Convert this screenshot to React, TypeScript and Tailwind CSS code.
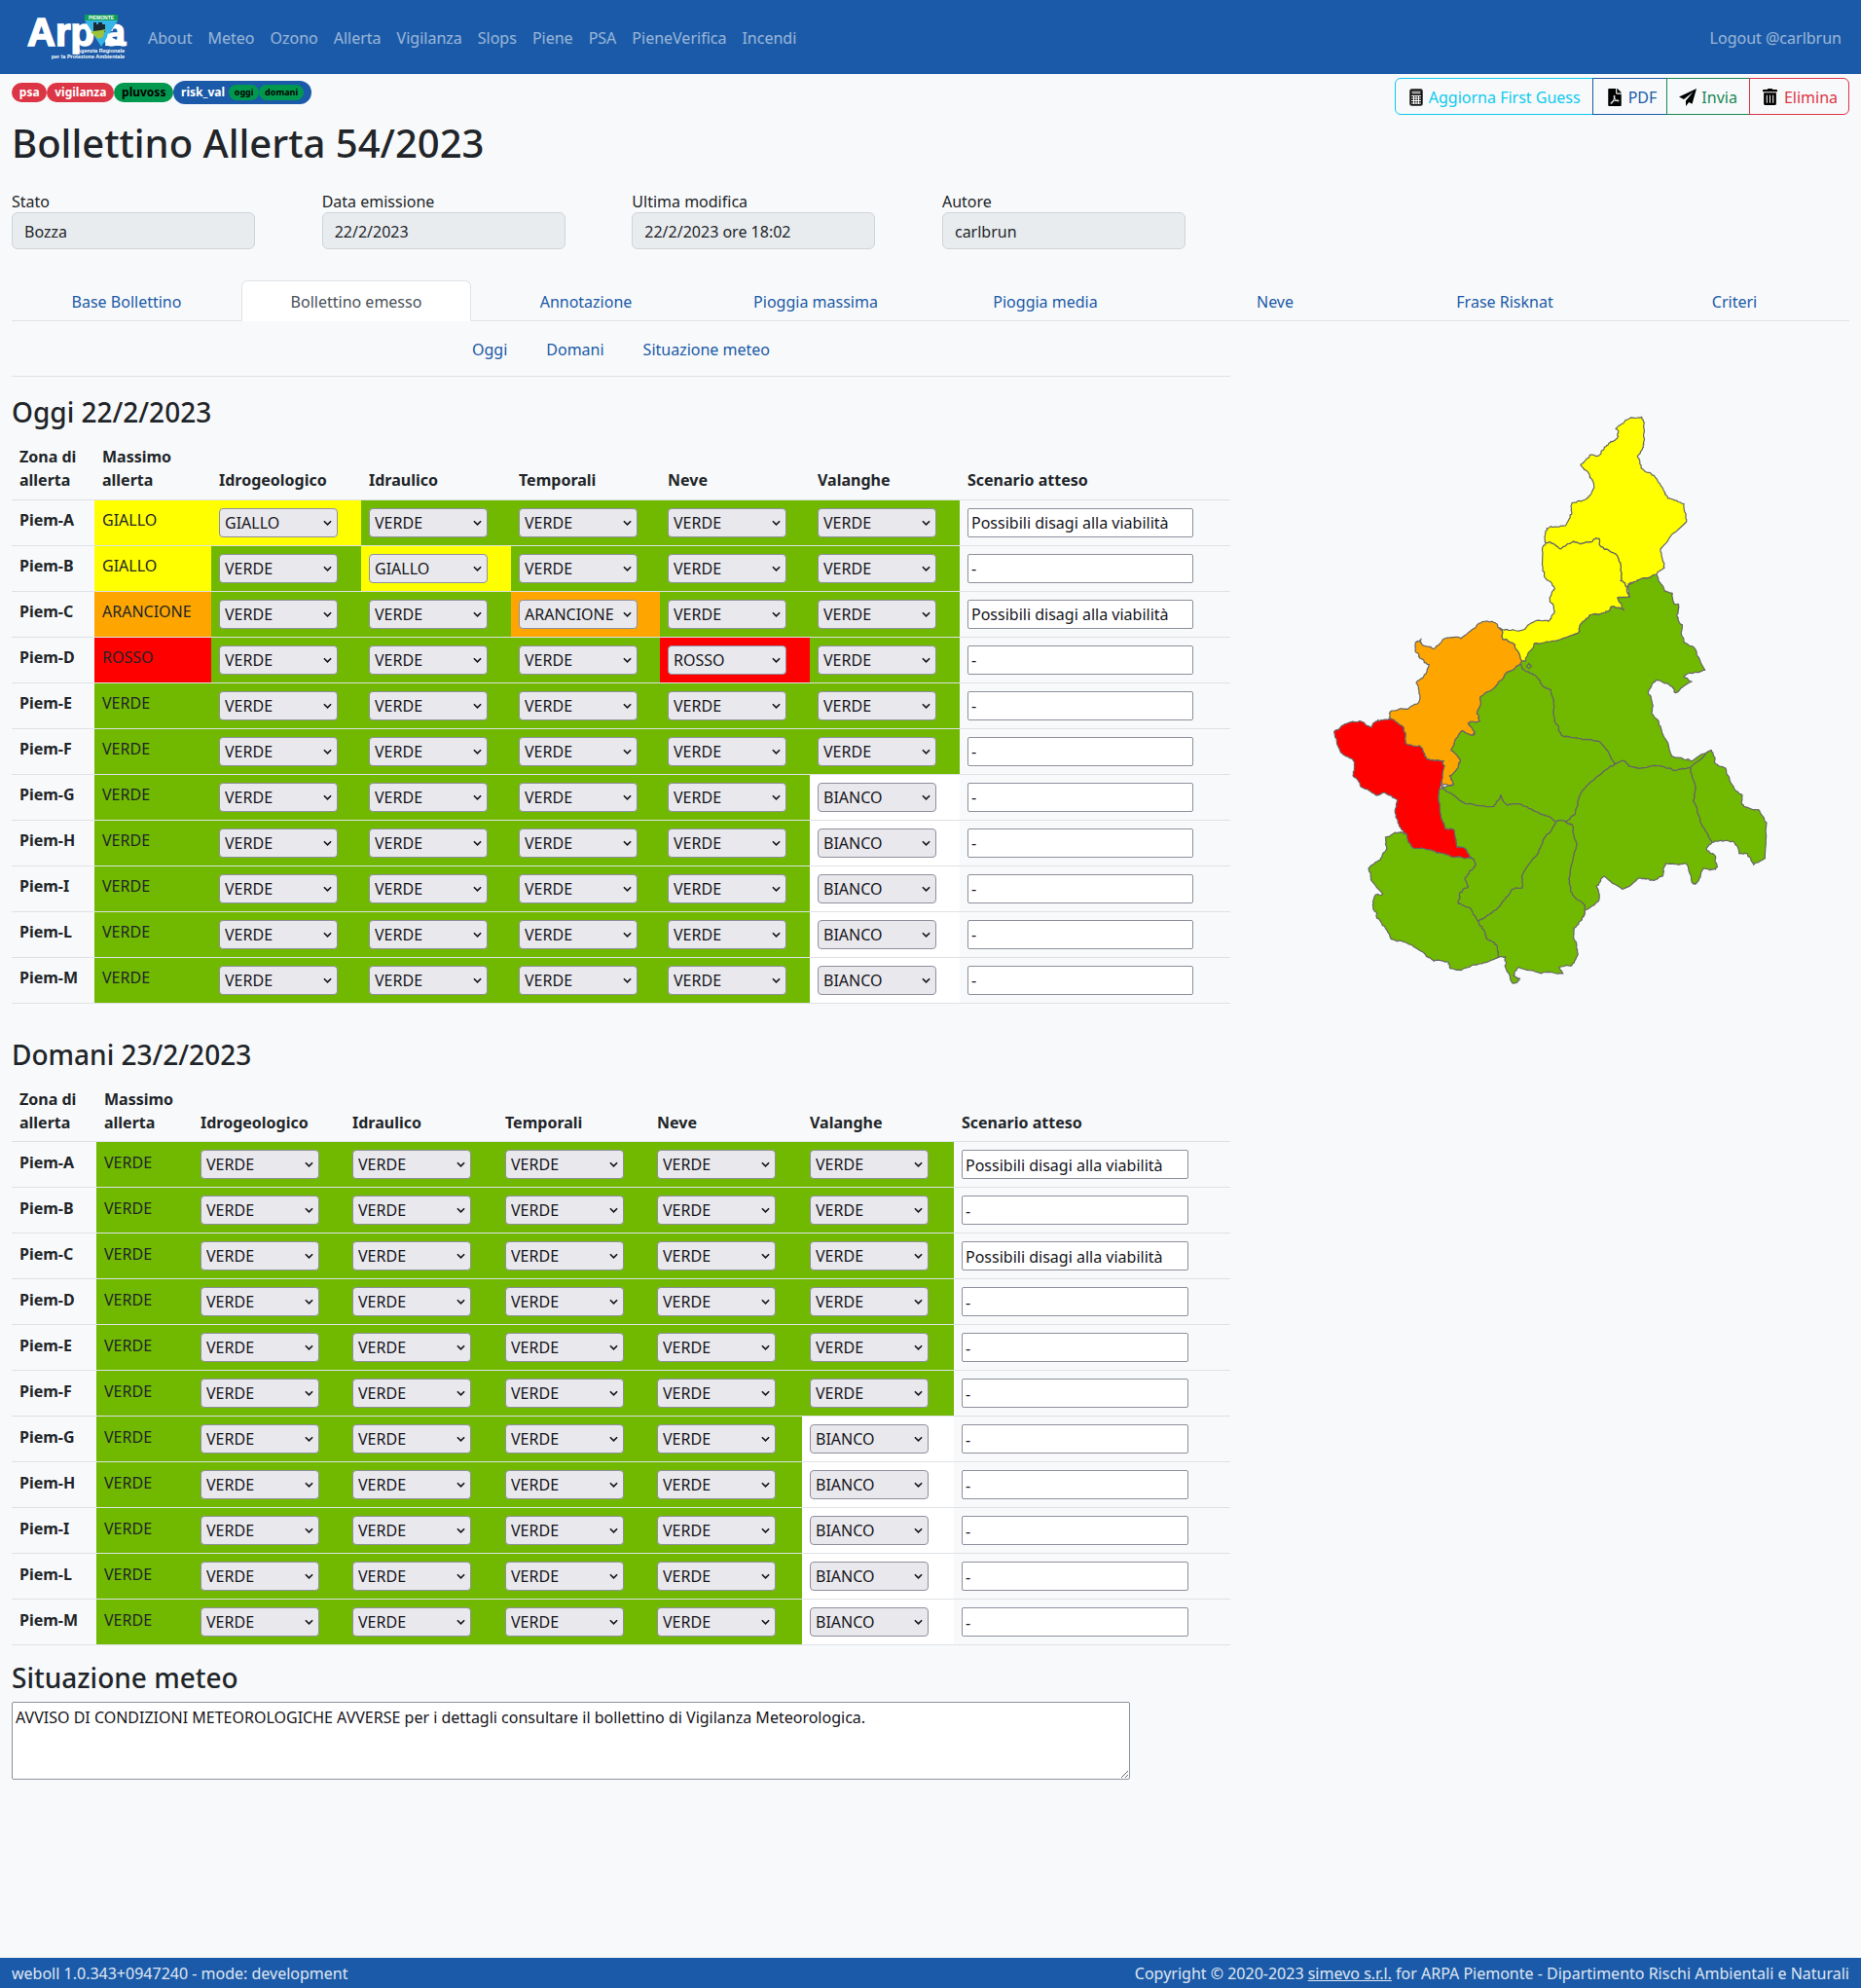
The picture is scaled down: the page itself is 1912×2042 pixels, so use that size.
import { FaFilePdf, FaTrashAlt } from "react-icons/fa";

type Level = "VERDE" | "GIALLO" | "ARANCIONE" | "ROSSO" | "BIANCO";
type Row = { zona: string; massimo: Level; livelli: Level[]; scenario: string };

const cellColors: Record<Level, string> = {
  VERDE: "bg-[#70b900]",
  GIALLO: "bg-[#ffff00]",
  ARANCIONE: "bg-[#ffa500]",
  ROSSO: "bg-[#ff0000]",
  BIANCO: "bg-white"
};

const zones = ["A", "B", "C", "D", "E", "F", "G", "H", "I", "L", "M"];
const disagi = "Possibili disagi alla viabilità";

// valanghe only applies to the first six zones
function makeRows(overrides: Record<string, Partial<Row>>): Row[] {
  return zones.map((z, i) => {
    const valanghe: Level = i < 6 ? "VERDE" : "BIANCO";
    return {
      zona: `Piem-${z}`,
      massimo: "VERDE",
      livelli: ["VERDE", "VERDE", "VERDE", "VERDE", valanghe],
      scenario: z === "A" || z === "C" ? disagi : "-",
      ...overrides[z]
    };
  });
}

const oggi = makeRows({
  A: { massimo: "GIALLO", livelli: ["GIALLO", "VERDE", "VERDE", "VERDE", "VERDE"] },
  B: { massimo: "GIALLO", livelli: ["VERDE", "GIALLO", "VERDE", "VERDE", "VERDE"] },
  C: { massimo: "ARANCIONE", livelli: ["VERDE", "VERDE", "ARANCIONE", "VERDE", "VERDE"] },
  D: { massimo: "ROSSO", livelli: ["VERDE", "VERDE", "VERDE", "ROSSO", "VERDE"] }
});
const domani = makeRows({});

function LevelSelect({ value }: { value: Level }) {
  return (
    <div className="relative w-[122px]">
      <select
        defaultValue={value}
        className="block h-[30px] w-full appearance-none rounded-[4px] border border-[#8f8f9d] bg-[#e9e9ed] pl-[5px] text-[16px] leading-[24px] text-[#15141a]"
      >
        {["VERDE", "GIALLO", "ARANCIONE", "ROSSO", "BIANCO"].map((o) => (
          <option key={o}>{o}</option>
        ))}
      </select>
      <svg viewBox="0 0 10 6" className="pointer-events-none absolute right-[6px] top-[12px] h-[6px] w-[9px]">
        <path d="M1 1l4 4 4-4" fill="none" stroke="#15141a" strokeWidth="1.8" />
      </svg>
    </div>
  );
}

function AlertTable({ rows, compact }: { rows: Row[]; compact?: boolean }) {
  const textCell = compact ? "px-[8px] pb-[7px] pt-[9px] align-top" : "p-[8px] align-top";
  return (
    <table className="w-full table-fixed text-[16px] leading-[24px] text-[#212529]">
      {compact ? (
        <colgroup>
          <col className="w-[87px]" />
          <col className="w-[99px]" />
          <col className="w-[156px]" />
          <col className="w-[157px]" />
          <col className="w-[156px]" />
          <col className="w-[157px]" />
          <col className="w-[156px]" />
          <col />
        </colgroup>
      ) : (
        <colgroup>
          <col className="w-[85px]" />
          <col className="w-[120px]" />
          <col className="w-[154px]" />
          <col className="w-[154px]" />
          <col className="w-[153px]" />
          <col className="w-[154px]" />
          <col className="w-[154px]" />
          <col />
        </colgroup>
      )}
      <thead>
        <tr className="border-b border-[#dee2e6]">
          {["Zona di allerta", "Massimo allerta", "Idrogeologico", "Idraulico", "Temporali", "Neve", "Valanghe", "Scenario atteso"].map(
            (h) => (
              <th key={h} className={`text-left font-bold ${compact ? "px-[8px] pb-[7px] pt-[9px] align-bottom" : "p-[8px] align-bottom"}`}>
                {h}
              </th>
            )
          )}
        </tr>
      </thead>
      <tbody>
        {rows.map((r) => (
          <tr key={r.zona} className="h-[47px] border-b border-[#dee2e6]">
            <td className={`${textCell} font-bold`}>{r.zona}</td>
            <td className={`${textCell} ${cellColors[r.massimo]}`}>{r.massimo}</td>
            {r.livelli.map((l, i) => (
              <td key={i} className={`px-[8px] py-0 align-middle ${cellColors[l]}`}>
                <LevelSelect value={l} />
              </td>
            ))}
            <td className="px-[8px] py-0 align-middle">
              <input
                defaultValue={r.scenario}
                className={`block h-[30px] rounded-[2px] border border-[#8f8f9d] bg-white px-[3px] text-[16px] text-[#15141a] ${compact ? "w-[233px] pt-[2px]" : "w-[232px]"}`}
              />
            </td>
          </tr>
        ))}
      </tbody>
    </table>
  );
}

function hash(x: number, y: number) {
  const s = Math.sin(x * 12.9898 + y * 78.233) * 43758.5453;
  return s - Math.floor(s) - 0.5;
}

// roughen the hand traced borders; shared edges get the same jag from either side
function rough(pts: number[][]) {
  let cur = pts;
  for (const amp of [9, 6, 4]) {
    const next: number[][] = [];
    cur.forEach((a, i) => {
      const b = cur[(i + 1) % cur.length];
      const mx = (a[0] + b[0]) / 2;
      const my = (a[1] + b[1]) / 2;
      next.push(a, [mx + hash(Math.round(mx), Math.round(my)) * amp, my + hash(Math.round(my), Math.round(mx)) * amp]);
    });
    cur = next;
  }
  return cur.map((p) => `${p[0].toFixed(1)},${p[1].toFixed(1)}`).join(" ");
}

const mapZones: { fill: string; pts: number[][] }[] = [
  {
    fill: "#70b900",
    pts: [[675,-115],[735,-125],[815,-150],[825,-180],[850,-205],[895,-212],[915,-230],[955,-220],[935,-258],[972,-260],[972,-300],[1010,-318],[1055,-330],[1080,-280],[1105,-270],[1110,-240],[1125,-230],[1118,-205],[1135,-175],[1140,-120],[1175,-100],[1205,-35],[1165,-25],[1140,-15],[1165,0],[1115,35],[1095,10],[1055,-5],[1030,35],[1045,75],[1042,100],[1070,145],[1103,230],[1140,240],[1165,245],[1225,212],[1160,265],[1110,275],[1075,262],[1000,268],[975,262],[955,245],[930,255],[880,185],[830,180],[770,170],[755,150],[740,110],[730,25],[705,15],[680,-20],[640,-40],[632,-50]]
  },
  {
    fill: "#70b900",
    pts: [[636,-55],[590,-25],[555,20],[515,45],[503,95],[510,122],[475,128],[495,155],[490,165],[455,152],[422,212],[450,240],[445,265],[418,292],[430,318],[395,325],[470,378],[555,385],[575,350],[595,380],[640,380],[690,403],[745,432],[775,432],[805,410],[820,350],[895,275],[930,255],[880,185],[830,180],[770,170],[755,150],[740,110],[730,25],[705,15],[680,-20],[640,-40]]
  },
  {
    fill: "#70b900",
    pts: [[930,255],[955,245],[975,262],[1000,268],[1075,262],[1110,275],[1160,265],[1175,320],[1170,370],[1190,430],[1228,495],[1210,515],[1235,535],[1243,572],[1225,578],[1200,575],[1175,625],[1165,620],[1145,560],[1085,560],[1075,600],[1040,612],[1005,605],[950,640],[895,600],[870,630],[878,675],[835,705],[825,735],[835,690],[790,645],[785,610],[810,500],[795,440],[775,432],[805,410],[820,350],[895,275]]
  },
  {
    fill: "#70b900",
    pts: [[1160,265],[1225,212],[1235,250],[1270,270],[1290,320],[1320,350],[1325,385],[1370,395],[1395,435],[1390,545],[1355,565],[1335,530],[1310,530],[1295,495],[1250,490],[1228,495],[1190,430],[1170,370],[1175,320]]
  },
  {
    fill: "#70b900",
    pts: [[745,432],[775,432],[795,440],[810,500],[785,610],[790,645],[835,690],[825,735],[800,760],[805,800],[812,845],[795,875],[755,880],[768,900],[700,900],[630,880],[615,905],[635,915],[612,930],[590,880],[590,850],[568,850],[565,815],[535,795],[525,770],[505,738],[545,715],[570,695],[610,640],[642,635],[640,600],[690,530],[715,475]]
  },
  {
    fill: "#70b900",
    pts: [[395,325],[470,378],[555,385],[575,350],[595,380],[640,380],[690,403],[745,432],[715,475],[690,530],[640,600],[642,635],[610,640],[570,695],[545,715],[505,738],[485,705],[445,685],[450,650],[472,635],[465,605],[497,570],[490,545],[470,520],[440,510],[428,455],[405,455],[388,395],[388,330]]
  },
  {
    fill: "#70b900",
    pts: [[305,512],[350,518],[400,530],[440,540],[490,545],[497,570],[465,605],[472,635],[450,650],[445,685],[485,705],[505,738],[525,770],[535,795],[565,815],[568,850],[510,870],[460,885],[425,885],[415,865],[370,862],[320,825],[270,800],[240,795],[220,760],[195,730],[182,700],[188,660],[212,655],[175,610],[168,575],[205,550],[225,515],[220,480],[250,465],[285,470]]
  },
  {
    fill: "#ffa500",
    pts: [[573,-165],[550,-185],[510,-180],[470,-145],[450,-135],[398,-130],[372,-102],[335,-112],[330,-132],[320,-125],[312,-95],[325,-72],[355,-52],[340,-20],[315,5],[325,60],[290,85],[240,90],[232,110],[275,140],[282,190],[325,198],[347,238],[400,245],[402,260],[395,322],[430,318],[418,292],[445,265],[450,240],[422,212],[455,152],[490,165],[495,155],[475,128],[510,122],[503,95],[515,45],[555,20],[590,-25],[636,-55],[636,-75],[612,-120],[582,-130]]
  },
  {
    fill: "#ff0000",
    pts: [[62,155],[100,130],[140,122],[178,142],[198,118],[232,115],[275,140],[282,190],[325,198],[347,238],[400,245],[402,260],[388,330],[388,395],[405,455],[428,455],[440,510],[470,520],[490,545],[440,540],[400,530],[350,518],[305,512],[285,470],[262,440],[250,395],[258,365],[215,342],[190,350],[145,325],[120,290],[125,250],[82,218]]
  },
  {
    fill: "#ffff00",
    pts: [[1010,-815],[1017,-800],[1018,-750],[1013,-720],[997,-695],[1008,-658],[1048,-635],[1083,-580],[1090,-565],[1140,-548],[1148,-492],[1068,-408],[1080,-350],[1055,-330],[1010,-318],[975,-305],[965,-290],[945,-310],[945,-360],[925,-395],[885,-415],[878,-440],[850,-430],[825,-425],[800,-432],[760,-408],[735,-425],[712,-430],[715,-465],[730,-478],[775,-480],[795,-520],[795,-550],[835,-560],[855,-580],[862,-610],[845,-645],[822,-668],[850,-698],[880,-698],[895,-722],[915,-740],[938,-755],[930,-778],[960,-805]]
  },
  {
    fill: "#ffff00",
    pts: [[712,-430],[735,-425],[760,-408],[800,-432],[825,-425],[850,-430],[878,-440],[885,-415],[925,-395],[945,-360],[945,-310],[965,-290],[972,-260],[935,-258],[955,-220],[915,-230],[895,-212],[850,-205],[825,-180],[815,-150],[735,-125],[680,-118],[668,-95],[650,-62],[636,-75],[612,-120],[582,-130],[573,-165],[600,-158],[640,-158],[680,-185],[722,-185],[742,-215],[727,-250],[742,-285],[712,-320],[706,-350],[708,-420]]
  }
];

function PiemonteMap() {
  return (
    <svg viewBox="0 -870 1500 1830" className="h-[610px] w-[500px]">
      {mapZones.map((z, i) => (
        <polygon key={i} points={rough(z.pts)} fill={z.fill} stroke="#666666" strokeWidth="3.6" strokeLinejoin="round" />
      ))}
      {/* tiny enclave where the northern zones meet */}
      <polygon points="662,-56 670,-48 664,-40 655,-46" fill="#70b900" stroke="#666666" strokeWidth="3.6" />
    </svg>
  );
}

function Logo() {
  return (
    <svg viewBox="0 0 116 56" className="h-[56px] w-[116px] shrink-0">
      <text x="4" y="37" fontSize="40" fontWeight="700" fill="#ffffff" stroke="#ffffff" strokeWidth="1.6" fontFamily="Liberation Sans, sans-serif">
        Arp
      </text>
      <text x="83" y="37" fontSize="40" fontWeight="700" fill="#ffffff" stroke="#ffffff" strokeWidth="1.2" fontFamily="Liberation Sans, sans-serif">
        a
      </text>
      <path d="M63 11h34L80 38z" fill="#35b6e6" />
      <rect x="63" y="5" width="34" height="6" fill="#0e9f55" />
      <text x="80" y="10" textAnchor="middle" fontSize="5" fontWeight="700" fill="#ffffff" fontFamily="Liberation Sans, sans-serif">
        PIEMONTE
      </text>
      <path d="M72 13h3v2h2v-2h4v2h3v8H72z" fill="#1c2b33" />
      <path d="M69 23c4-2 10-1 15-3l-2 8-5 2z" fill="#9dc33b" />
      <path d="M87 24c3 4 7 7 13 8v5H84z" fill="#ffffff" />
      <g fontSize="5.5" fontWeight="700" fill="#ffffff" textAnchor="end" fontFamily="Liberation Sans, sans-serif">
        <text x="104" y="44">Agenzia Regionale</text>
        <text x="104" y="50">per la Protezione Ambientale</text>
      </g>
    </svg>
  );
}

function CalculatorIcon() {
  return (
    <svg viewBox="0 0 14 18" className="h-[18px] w-[14px] shrink-0">
      <rect x="0.5" y="0.5" width="13" height="17" rx="2" fill="#111111" stroke="#555555" />
      <rect x="2.5" y="2.5" width="9" height="3" fill="#9a9a9a" />
      <path d="M2 7h10v1H2zM2 9.5h10v1H2zM2 12h10v1H2zM2 14.5h10v1H2zM4 7h1v9H4zM6.5 7h1v9h-1zM9 7h1v9H9z" fill="#ffffff" />
    </svg>
  );
}

function PlaneIcon() {
  return (
    <svg viewBox="0 0 18 18" className="h-[18px] w-[18px] shrink-0">
      <path d="M18 0L0 8.5l5 2.5L14.5 3.5 7 12.5V18l3.2-4 3.3 1.8z" fill="#000000" />
    </svg>
  );
}

function Badge({ color, children }: { color: string; children: React.ReactNode }) {
  return <span className={`rounded-full px-[7.8px] text-[12px] font-bold leading-[20px] ${color}`}>{children}</span>;
}

function ReadonlyField({ label, value }: { label: string; value: string }) {
  return (
    <div className="w-[318.67px]">
      <label className="block h-[23px] leading-[24px] text-[#212529]">{label}</label>
      <div className="flex h-[38px] w-[250px] items-center rounded-[6px] border border-[#ced4da] bg-[#e9ecef] px-[12px] pt-px text-[#212529]">
        {value}
      </div>
    </div>
  );
}

const navItems = ["About", "Meteo", "Ozono", "Allerta", "Vigilanza", "Slops", "Piene", "PSA", "PieneVerifica", "Incendi"];
const tabs = ["Base Bollettino", "Bollettino emesso", "Annotazione", "Pioggia massima", "Pioggia media", "Neve", "Frase Risknat", "Criteri"];

export default function App() {
  return (
    <div className="flex min-h-screen flex-col bg-[#f8f9fa] font-['Noto_Sans',sans-serif] text-[16px] text-[#212529]">
      <nav className="flex h-[76px] items-center bg-[#1a5aa8] pl-[24px] pr-[12px]">
        <Logo />
        <div className="ml-[4px] flex pt-[2px]">
          {navItems.map((n) => (
            <a key={n} className="px-[8px] text-white/55">
              {n}
            </a>
          ))}
        </div>
        <a className="ml-auto px-[8px] pt-[2px] text-white/55">Logout @carlbrun</a>
      </nav>

      <main className="flex-1 px-[12px]">
        <div className="flex h-[48px] items-start justify-between pt-[4px]">
          <div className="mt-[3px] flex items-center">
            <Badge color="bg-[#dc3545] text-white">psa</Badge>
            <Badge color="bg-[#dc3545] text-white">vigilanza</Badge>
            <Badge color="bg-[#00984f] text-black">pluvoss</Badge>
            <div className="flex h-[24px] items-center rounded-full bg-[#1a5aa8] px-[7.8px] text-[12px] font-bold text-white">
              risk_val
              <span className="ml-[4px] rounded-full bg-[#00984f] px-[5.8px] text-[9px] leading-[16px] text-black">oggi</span>
              <span className="rounded-full bg-[#00984f] px-[5.8px] text-[9px] leading-[16px] text-black">domani</span>
            </div>
          </div>
          <div className="flex h-[38px]">
            <button className="flex items-center gap-[6px] rounded-l-[6px] border border-[#0dcaf0] pl-[14px] pr-[12px] pt-px text-[#0dcaf0]">
              <CalculatorIcon />
              Aggiorna First Guess
            </button>
            <button className="-ml-px flex items-center gap-[5px] border border-[#1a5aa8] pl-[13px] pr-[10px] pt-px text-[#1a5aa8]">
              <FaFilePdf className="text-black" size={18} />
              PDF
            </button>
            <button className="-ml-px flex items-center gap-[5px] border border-[#198754] pl-[12px] pr-[12px] pt-px text-[#198754]">
              <PlaneIcon />
              Invia
            </button>
            <button className="-ml-px flex items-center gap-[6px] rounded-r-[6px] border border-[#dc3545] pl-[12px] pr-[11px] pt-px text-[#dc3545]">
              <FaTrashAlt className="text-black" size={17} />
              Elimina
            </button>
          </div>
        </div>

        <h1 className="h-[48px] text-[40px] font-medium leading-[46px]">Bollettino Allerta 54/2023</h1>

        <div className="mt-[23px] flex">
          <ReadonlyField label="Stato" value="Bozza" />
          <ReadonlyField label="Data emissione" value="22/2/2023" />
          <ReadonlyField label="Ultima modifica" value="22/2/2023 ore 18:02" />
          <ReadonlyField label="Autore" value="carlbrun" />
        </div>

        <div className="mt-[32px] grid h-[42px] grid-cols-8 border-b border-[#dee2e6]">
          {tabs.map((t) => (
            <a
              key={t}
              className={
                t === "Bollettino emesso"
                  ? "-mb-px flex items-center justify-center rounded-t-[6px] border border-[#dee2e6] border-b-white bg-white pt-px text-[#495057]"
                  : "flex items-center justify-center pt-[2px] text-[#1a5aa8]"
              }
            >
              {t}
            </a>
          ))}
        </div>

        <div className="flex">
          <div className="w-[1252px] shrink-0">
            <div className="flex h-[57px] justify-center border-b border-[#dee2e6] pt-[9px]">
              {["Oggi", "Domani", "Situazione meteo"].map((s) => (
                <a key={s} className="flex h-[40px] items-center px-[20px] text-[#1a5aa8]">
                  {s}
                </a>
              ))}
            </div>

            <h3 className="mb-[9px] mt-[19px] text-[28px] font-medium leading-[34px]">Oggi 22/2/2023</h3>
            <AlertTable rows={oggi} />

            <h3 className="mb-[8px] mt-[35px] text-[28px] font-medium leading-[34px]">Domani 23/2/2023</h3>
            <AlertTable rows={domani} compact />

            <h3 className="mb-[8px] mt-[16px] text-[28px] font-medium leading-[34px]">Situazione meteo</h3>
            <textarea
              defaultValue="AVVISO DI CONDIZIONI METEOROLOGICHE AVVERSE per i dettagli consultare il bollettino di Vigilanza Meteorologica."
              className="block h-[80px] w-[1149px] rounded-[2px] border border-[#8f8f9d] bg-white p-[3px] text-[16px] leading-[24px] text-[#15141a]"
            />
          </div>
          <div className="pl-[86px] pt-[80px]">
            <PiemonteMap />
          </div>
        </div>
      </main>

      <footer className="flex h-[31px] items-center justify-between bg-[#1a5aa8] px-[12px] text-white/85">
        <span>weboll 1.0.343+0947240 - mode: development</span>
        <span>
          Copyright © 2020-2023 <u>simevo s.r.l.</u> for ARPA Piemonte - Dipartimento Rischi Ambientali e Naturali
        </span>
      </footer>
    </div>
  );
}
